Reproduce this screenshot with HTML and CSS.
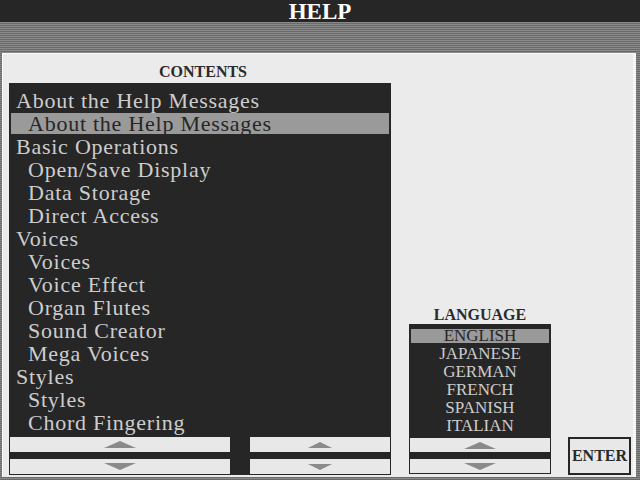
FILE: index.html
```html
<!DOCTYPE html>
<html>
<head>
<meta charset="utf-8">
<link rel="stylesheet" href="styles.css">
</head>
<body>
<div class="title"><span class="title-text">HELP</span></div>
<div class="band"></div>
<div class="panel">
  <div class="contents">
    <div class="label">CONTENTS</div>
    <div class="listbox">
      <div class="list">
        <div class="row l1">About the Help Messages</div>
        <div class="row l2 sel">About the Help Messages</div>
        <div class="row l1">Basic Operations</div>
        <div class="row l2">Open/Save Display</div>
        <div class="row l2">Data Storage</div>
        <div class="row l2">Direct Access</div>
        <div class="row l1">Voices</div>
        <div class="row l2">Voices</div>
        <div class="row l2">Voice Effect</div>
        <div class="row l2">Organ Flutes</div>
        <div class="row l2">Sound Creator</div>
        <div class="row l2">Mega Voices</div>
        <div class="row l1">Styles</div>
        <div class="row l2">Styles</div>
        <div class="row l2">Chord Fingering</div>
      </div>
      <div class="scrollrow">
        <div class="scroll wide">
          <div class="btn"><span class="tri up big"></span></div>
          <div class="btn"><span class="tri down big"></span></div>
        </div>
        <div class="scroll narrow">
          <div class="btn"><span class="tri up small"></span></div>
          <div class="btn"><span class="tri down small"></span></div>
        </div>
      </div>
    </div>
  </div>
  <div class="language">
    <div class="label">LANGUAGE</div>
    <div class="langbox">
      <div class="langlist">
        <div class="lrow sel">ENGLISH</div>
        <div class="lrow">JAPANESE</div>
        <div class="lrow">GERMAN</div>
        <div class="lrow">FRENCH</div>
        <div class="lrow">SPANISH</div>
        <div class="lrow">ITALIAN</div>
      </div>
      <div class="scroll lang">
        <div class="btn"><span class="tri up big"></span></div>
        <div class="btn"><span class="tri down big"></span></div>
      </div>
    </div>
  </div>
  <div class="enter">ENTER</div>
</div>
</body>
</html>
```

FILE: styles.css
```css
html, body {
  margin: 0;
  padding: 0;
}
body {
  width: 640px;
  height: 480px;
  overflow: hidden;
  font-family: "Liberation Serif", "Times New Roman", serif;
  background: repeating-linear-gradient(to bottom, #8a8a8a 0 1px, #6a6a6a 1px 2px);
}
.title {
  height: 22px;
  background: #262626;
  color: #ffffff;
  font-weight: bold;
  font-size: 23px;
  line-height: 22px;
  text-align: center;
}
.title-text {
  display: inline-block;
  height: 22px;
  line-height: 23px;
}
.band {
  height: 31px;
}
.panel {
  box-sizing: border-box;
  margin-left: 2px;
  width: 634px;
  height: 424px;
  background: #ebebeb;
  border-top: 1px solid #fafafa;
  border-left: 1px solid #fafafa;
  border-right: 3px solid #f6f6f6;
  padding: 0 0 2px 6px;
  display: flex;
  align-items: flex-end;
}
.label {
  font-weight: bold;
  font-size: 16px;
  line-height: 18px;
  color: #2a2a2a;
  text-align: center;
}
.contents {
  width: 382px;
  display: flex;
  flex-direction: column;
}
.contents .label {
  padding: 9px 0 2px 0;
  margin-right: -6px;
}
.listbox {
  background: #262626;
  height: 392px;
  box-sizing: border-box;
  padding: 6px 1px 1px 1px;
  display: flex;
  flex-direction: column;
}
.list {
  height: 345px;
}
.row {
  font-size: 22px;
  line-height: 21px;
  letter-spacing: 0.75px;
  color: #cdcdcd;
  border-top: 1px solid transparent;
  border-bottom: 1px solid transparent;
  margin: 0 1px;
  white-space: nowrap;
}
.row.l1 { padding-left: 5px; }
.row.l2 { padding-left: 17px; }
.row.sel {
  background: #9a9a9a;
  background-clip: padding-box;
  color: #262626;
}
.scrollrow {
  margin-top: 3px;
  display: flex;
  justify-content: space-between;
}
.scroll {
  display: flex;
  flex-direction: column;
  gap: 7px;
}
.scroll.wide { width: 220px; }
.scroll.narrow { width: 140px; }
.btn {
  height: 15px;
  background: #e8e8e8;
  display: flex;
  align-items: center;
  justify-content: center;
}
.tri {
  width: 0;
  height: 0;
  display: block;
}
.tri.up.big {
  border-left: 16px solid transparent;
  border-right: 16px solid transparent;
  border-bottom: 7px solid #8a8a8a;
}
.tri.down.big {
  border-left: 16px solid transparent;
  border-right: 16px solid transparent;
  border-top: 7px solid #8a8a8a;
}
.tri.up.small {
  border-left: 12px solid transparent;
  border-right: 12px solid transparent;
  border-bottom: 6px solid #8a8a8a;
}
.tri.down.small {
  border-left: 12px solid transparent;
  border-right: 12px solid transparent;
  border-top: 6px solid #8a8a8a;
}
.language {
  width: 142px;
  margin-left: 18px;
  margin-bottom: 1px;
  display: flex;
  flex-direction: column;
}
.langbox {
  background: #262626;
  height: 150px;
  box-sizing: border-box;
  padding: 3px 1px 1px 1px;
}
.langlist {
  height: 108px;
}
.lrow {
  font-size: 17px;
  line-height: 14px;
  border-top: 2px solid transparent;
  border-bottom: 2px solid transparent;
  margin: 0 1px;
  text-align: center;
  color: #cdcdcd;
}
.lrow.sel {
  background: #9a9a9a;
  background-clip: padding-box;
  color: #262626;
}
.scroll.lang {
  margin-top: 3px;
}
.scroll.lang .btn {
  height: 14px;
}
.enter {
  margin-left: 17px;
  width: 63px;
  height: 38px;
  box-sizing: border-box;
  border: 2px solid #262626;
  background: #e8e8e8;
  color: #2a2a2a;
  font-weight: bold;
  font-size: 16px;
  line-height: 34px;
  text-align: center;
}
```
